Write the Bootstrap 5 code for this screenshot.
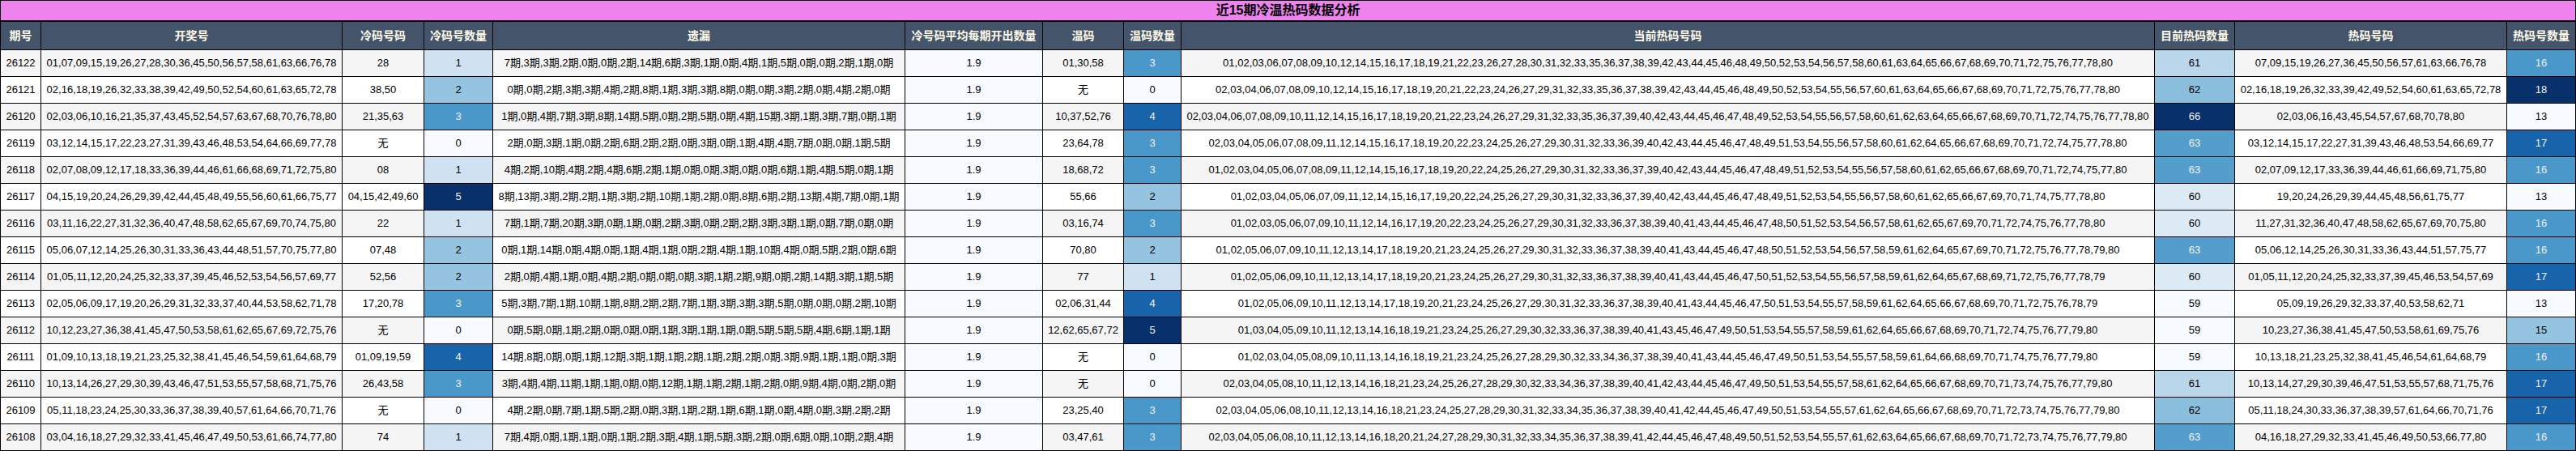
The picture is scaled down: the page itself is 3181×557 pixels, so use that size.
<!DOCTYPE html>
<html lang="zh-CN">
<head>
<meta charset="utf-8">
<title>近15期冷温热码数据分析</title>
<link href="https://cdn.jsdelivr.net/npm/bootstrap@5.3.0/dist/css/bootstrap.min.css" rel="stylesheet">
<style>
html,body{background:#fff;overflow:hidden}
body{font-family:"Liberation Sans","Noto Sans CJK SC",sans-serif;font-size:13px}
.analysis{width:3181px;table-layout:fixed;--bs-table-border-color:#000;--bs-table-color:#000;--bs-table-striped-color:#000;--bs-table-striped-bg:#f5f5f5;--bs-table-bg:#fff}
.analysis>:not(caption)>*>*{padding:6px 2px;line-height:20px;font-size:13px}
.analysis>thead>tr>th{padding:7px 2px;line-height:20px;font-size:14px;font-weight:700;--bs-table-bg:#44546a;--bs-table-color:#fffbe8;color:#fffbe8;background-color:#44546a}
.analysis>thead>tr>th.title-cell{padding:0;line-height:24px;font-size:16px;--bs-table-bg:#ee82ee;--bs-table-color:#000;color:#000;background-color:#ee82ee;border-bottom-width:2px}
.w1{width:50px}.w2{width:372px}.w3{width:101px}.w4{width:85px}.w5{width:509px}.w6{width:170px}.w7{width:100px}.w8{width:71px}.w9{width:1202px}.w10{width:99px}.w11{width:336px}.w12{width:85px}
.table>tbody>tr>td.h0{--bs-table-accent-bg:#f7fbff;--bs-table-bg-type:#f7fbff;background-color:#f7fbff;color:#000}
.table>tbody>tr>td.h1{--bs-table-accent-bg:#d0e1f2;--bs-table-bg-type:#d0e1f2;background-color:#d0e1f2;color:#000}
.table>tbody>tr>td.h2{--bs-table-accent-bg:#94c4df;--bs-table-bg-type:#94c4df;background-color:#94c4df;color:#000}
.table>tbody>tr>td.h3{--bs-table-accent-bg:#4a98c9;--bs-table-bg-type:#4a98c9;background-color:#4a98c9;color:#f1f1f1}
.table>tbody>tr>td.h4{--bs-table-accent-bg:#1764ab;--bs-table-bg-type:#1764ab;background-color:#1764ab;color:#f1f1f1}
.table>tbody>tr>td.h5{--bs-table-accent-bg:#08306b;--bs-table-bg-type:#08306b;background-color:#08306b;color:#f1f1f1}
.table>tbody>tr>td.c60{--bs-table-accent-bg:#dceaf6;--bs-table-bg-type:#dceaf6;background-color:#dceaf6;color:#000}
.table>tbody>tr>td.c61{--bs-table-accent-bg:#bad6eb;--bs-table-bg-type:#bad6eb;background-color:#bad6eb;color:#000}
.table>tbody>tr>td.c62{--bs-table-accent-bg:#89bedc;--bs-table-bg-type:#89bedc;background-color:#89bedc;color:#000}
.table>tbody>tr>td.c63{--bs-table-accent-bg:#539ecd;--bs-table-bg-type:#539ecd;background-color:#539ecd;color:#f1f1f1}
</style>
</head>
<body>
<table class="table table-bordered table-striped analysis text-center align-middle text-nowrap mb-0">
<colgroup><col class="w1"><col class="w2"><col class="w3"><col class="w4"><col class="w5"><col class="w6"><col class="w7"><col class="w8"><col class="w9"><col class="w10"><col class="w11"><col class="w12"></colgroup>
<thead>
<tr><th colspan="12" class="title-cell">近15期冷温热码数据分析</th></tr>
<tr><th>期号</th><th>开奖号</th><th>冷码号码</th><th>冷码号数量</th><th>遗漏</th><th>冷号码平均每期开出数量</th><th>温码</th><th>温码数量</th><th>当前热码号码</th><th>目前热码数量</th><th>热码号码</th><th>热码号数量</th></tr>
</thead>
<tbody>
<tr><td>26122</td><td>01,07,09,15,19,26,27,28,30,36,45,50,56,57,58,61,63,66,76,78</td><td>28</td><td class="h1">1</td><td>7期,3期,3期,2期,0期,0期,2期,14期,6期,3期,1期,0期,4期,1期,5期,0期,0期,2期,1期,0期</td><td class="h0">1.9</td><td>01,30,58</td><td class="h3">3</td><td>01,02,03,06,07,08,09,10,12,14,15,16,17,18,19,21,22,23,26,27,28,30,31,32,33,35,36,37,38,39,42,43,44,45,46,48,49,50,52,53,54,56,57,58,60,61,63,64,65,66,67,68,69,70,71,72,75,76,77,78,80</td><td class="c61">61</td><td>07,09,15,19,26,27,36,45,50,56,57,61,63,66,76,78</td><td class="h3">16</td></tr>
<tr><td>26121</td><td>02,16,18,19,26,32,33,38,39,42,49,50,52,54,60,61,63,65,72,78</td><td>38,50</td><td class="h2">2</td><td>0期,0期,2期,3期,3期,4期,2期,8期,1期,3期,3期,8期,0期,0期,3期,2期,0期,4期,2期,0期</td><td class="h0">1.9</td><td>无</td><td class="h0">0</td><td>02,03,04,06,07,08,09,10,12,14,15,16,17,18,19,20,21,22,23,24,26,27,29,31,32,33,35,36,37,38,39,42,43,44,45,46,48,49,50,52,53,54,55,56,57,60,61,63,64,65,66,67,68,69,70,71,72,75,76,77,78,80</td><td class="c62">62</td><td>02,16,18,19,26,32,33,39,42,49,52,54,60,61,63,65,72,78</td><td class="h5">18</td></tr>
<tr><td>26120</td><td>02,03,06,10,16,21,35,37,43,45,52,54,57,63,67,68,70,76,78,80</td><td>21,35,63</td><td class="h3">3</td><td>1期,0期,4期,7期,3期,8期,14期,5期,0期,2期,5期,0期,4期,15期,3期,1期,3期,7期,0期,1期</td><td class="h0">1.9</td><td>10,37,52,76</td><td class="h4">4</td><td>02,03,04,06,07,08,09,10,11,12,14,15,16,17,18,19,20,21,22,23,24,26,27,29,31,32,33,35,36,37,39,40,42,43,44,45,46,47,48,49,52,53,54,55,56,57,58,60,61,62,63,64,65,66,67,68,69,70,71,72,74,75,76,77,78,80</td><td class="h5">66</td><td>02,03,06,16,43,45,54,57,67,68,70,78,80</td><td class="h0">13</td></tr>
<tr><td>26119</td><td>03,12,14,15,17,22,23,27,31,39,43,46,48,53,54,64,66,69,77,78</td><td>无</td><td class="h0">0</td><td>2期,0期,3期,1期,0期,2期,6期,2期,2期,0期,3期,0期,1期,4期,4期,7期,0期,0期,1期,5期</td><td class="h0">1.9</td><td>23,64,78</td><td class="h3">3</td><td>02,03,04,05,06,07,08,09,11,12,14,15,16,17,18,19,20,22,23,24,25,26,27,29,30,31,32,33,36,39,40,42,43,44,45,46,47,48,49,51,53,54,55,56,57,58,60,61,62,64,65,66,67,68,69,70,71,72,74,75,77,78,80</td><td class="c63">63</td><td>03,12,14,15,17,22,27,31,39,43,46,48,53,54,66,69,77</td><td class="h4">17</td></tr>
<tr><td>26118</td><td>02,07,08,09,12,17,18,33,36,39,44,46,61,66,68,69,71,72,75,80</td><td>08</td><td class="h1">1</td><td>4期,2期,10期,4期,2期,4期,6期,2期,1期,0期,0期,3期,0期,0期,6期,1期,4期,5期,0期,1期</td><td class="h0">1.9</td><td>18,68,72</td><td class="h3">3</td><td>01,02,03,04,05,06,07,08,09,11,12,14,15,16,17,18,19,20,22,24,25,26,27,29,30,31,32,33,36,37,39,40,42,43,44,45,46,47,48,49,51,52,53,54,55,56,57,58,60,61,62,65,66,67,68,69,70,71,72,74,75,77,80</td><td class="c63">63</td><td>02,07,09,12,17,33,36,39,44,46,61,66,69,71,75,80</td><td class="h3">16</td></tr>
<tr><td>26117</td><td>04,15,19,20,24,26,29,39,42,44,45,48,49,55,56,60,61,66,75,77</td><td>04,15,42,49,60</td><td class="h5">5</td><td>8期,13期,3期,2期,2期,1期,3期,2期,10期,1期,2期,0期,8期,6期,2期,13期,4期,7期,0期,1期</td><td class="h0">1.9</td><td>55,66</td><td class="h2">2</td><td>01,02,03,04,05,06,07,09,11,12,14,15,16,17,19,20,22,24,25,26,27,29,30,31,32,33,36,37,39,40,42,43,44,45,46,47,48,49,51,52,53,54,55,56,57,58,60,61,62,65,66,67,69,70,71,74,75,77,78,80</td><td class="c60">60</td><td>19,20,24,26,29,39,44,45,48,56,61,75,77</td><td class="h0">13</td></tr>
<tr><td>26116</td><td>03,11,16,22,27,31,32,36,40,47,48,58,62,65,67,69,70,74,75,80</td><td>22</td><td class="h1">1</td><td>7期,1期,7期,20期,3期,0期,1期,0期,2期,3期,0期,2期,2期,3期,3期,1期,0期,7期,0期,0期</td><td class="h0">1.9</td><td>03,16,74</td><td class="h3">3</td><td>01,02,03,05,06,07,09,10,11,12,14,16,17,19,20,22,23,24,25,26,27,29,30,31,32,33,36,37,38,39,40,41,43,44,45,46,47,48,50,51,52,53,54,56,57,58,61,62,65,67,69,70,71,72,74,75,76,77,78,80</td><td class="c60">60</td><td>11,27,31,32,36,40,47,48,58,62,65,67,69,70,75,80</td><td class="h3">16</td></tr>
<tr><td>26115</td><td>05,06,07,12,14,25,26,30,31,33,36,43,44,48,51,57,70,75,77,80</td><td>07,48</td><td class="h2">2</td><td>0期,1期,14期,0期,4期,0期,1期,4期,1期,0期,2期,4期,1期,10期,4期,0期,5期,2期,0期,6期</td><td class="h0">1.9</td><td>70,80</td><td class="h2">2</td><td>01,02,05,06,07,09,10,11,12,13,14,17,18,19,20,21,23,24,25,26,27,29,30,31,32,33,36,37,38,39,40,41,43,44,45,46,47,48,50,51,52,53,54,56,57,58,59,61,62,64,65,67,69,70,71,72,75,76,77,78,79,80</td><td class="c63">63</td><td>05,06,12,14,25,26,30,31,33,36,43,44,51,57,75,77</td><td class="h3">16</td></tr>
<tr><td>26114</td><td>01,05,11,12,20,24,25,32,33,37,39,45,46,52,53,54,56,57,69,77</td><td>52,56</td><td class="h2">2</td><td>2期,0期,4期,1期,0期,4期,2期,0期,0期,0期,3期,1期,2期,9期,0期,2期,14期,3期,1期,5期</td><td class="h0">1.9</td><td>77</td><td class="h1">1</td><td>01,02,05,06,09,10,11,12,13,14,17,18,19,20,21,23,24,25,26,27,29,30,31,32,33,36,37,38,39,40,41,43,44,45,46,47,50,51,52,53,54,55,56,57,58,59,61,62,64,65,67,68,69,71,72,75,76,77,78,79</td><td class="c60">60</td><td>01,05,11,12,20,24,25,32,33,37,39,45,46,53,54,57,69</td><td class="h4">17</td></tr>
<tr><td>26113</td><td>02,05,06,09,17,19,20,26,29,31,32,33,37,40,44,53,58,62,71,78</td><td>17,20,78</td><td class="h3">3</td><td>5期,3期,7期,1期,10期,1期,8期,2期,2期,7期,1期,3期,3期,3期,5期,0期,0期,0期,2期,10期</td><td class="h0">1.9</td><td>02,06,31,44</td><td class="h4">4</td><td>01,02,05,06,09,10,11,12,13,14,17,18,19,20,21,23,24,25,26,27,29,30,31,32,33,36,37,38,39,40,41,43,44,45,46,47,50,51,53,54,55,57,58,59,61,62,64,65,66,67,68,69,70,71,72,75,76,78,79</td><td class="h0">59</td><td>05,09,19,26,29,32,33,37,40,53,58,62,71</td><td class="h0">13</td></tr>
<tr><td>26112</td><td>10,12,23,27,36,38,41,45,47,50,53,58,61,62,65,67,69,72,75,76</td><td>无</td><td class="h0">0</td><td>0期,5期,0期,1期,2期,0期,0期,0期,1期,3期,1期,1期,0期,5期,5期,5期,4期,6期,1期,1期</td><td class="h0">1.9</td><td>12,62,65,67,72</td><td class="h5">5</td><td>01,03,04,05,09,10,11,12,13,14,16,18,19,21,23,24,25,26,27,29,30,32,33,36,37,38,39,40,41,43,45,46,47,49,50,51,53,54,55,57,58,59,61,62,64,65,66,67,68,69,70,71,72,74,75,76,77,79,80</td><td class="h0">59</td><td>10,23,27,36,38,41,45,47,50,53,58,61,69,75,76</td><td class="h2">15</td></tr>
<tr><td>26111</td><td>01,09,10,13,18,19,21,23,25,32,38,41,45,46,54,59,61,64,68,79</td><td>01,09,19,59</td><td class="h4">4</td><td>14期,8期,0期,0期,1期,12期,3期,1期,1期,2期,1期,2期,2期,0期,3期,9期,1期,1期,0期,3期</td><td class="h0">1.9</td><td>无</td><td class="h0">0</td><td>01,02,03,04,05,08,09,10,11,13,14,16,18,19,21,23,24,25,26,27,28,29,30,32,33,34,36,37,38,39,40,41,43,44,45,46,47,49,50,51,53,54,55,57,58,59,61,64,66,68,69,70,71,74,75,76,77,79,80</td><td class="h0">59</td><td>10,13,18,21,23,25,32,38,41,45,46,54,61,64,68,79</td><td class="h3">16</td></tr>
<tr><td>26110</td><td>10,13,14,26,27,29,30,39,43,46,47,51,53,55,57,58,68,71,75,76</td><td>26,43,58</td><td class="h3">3</td><td>3期,4期,4期,11期,1期,1期,0期,0期,12期,1期,1期,2期,1期,2期,0期,9期,4期,0期,2期,0期</td><td class="h0">1.9</td><td>无</td><td class="h0">0</td><td>02,03,04,05,08,10,11,12,13,14,16,18,21,23,24,25,26,27,28,29,30,32,33,34,36,37,38,39,40,41,42,43,44,45,46,47,49,50,51,53,54,55,57,58,61,62,64,65,66,67,68,69,70,71,73,74,75,76,77,79,80</td><td class="c61">61</td><td>10,13,14,27,29,30,39,46,47,51,53,55,57,68,71,75,76</td><td class="h4">17</td></tr>
<tr><td>26109</td><td>05,11,18,23,24,25,30,33,36,37,38,39,40,57,61,64,66,70,71,76</td><td>无</td><td class="h0">0</td><td>4期,2期,0期,7期,1期,5期,2期,0期,3期,1期,2期,1期,6期,1期,0期,4期,0期,3期,2期,2期</td><td class="h0">1.9</td><td>23,25,40</td><td class="h3">3</td><td>02,03,04,05,06,08,10,11,12,13,14,16,18,21,23,24,25,27,28,29,30,31,32,33,34,35,36,37,38,39,40,41,42,44,45,46,47,49,50,51,53,54,55,57,61,62,64,65,66,67,68,69,70,71,72,73,74,75,76,77,79,80</td><td class="c62">62</td><td>05,11,18,24,30,33,36,37,38,39,57,61,64,66,70,71,76</td><td class="h4">17</td></tr>
<tr><td>26108</td><td>03,04,16,18,27,29,32,33,41,45,46,47,49,50,53,61,66,74,77,80</td><td>74</td><td class="h1">1</td><td>7期,4期,0期,1期,1期,0期,1期,2期,3期,4期,1期,5期,3期,2期,0期,6期,0期,10期,2期,4期</td><td class="h0">1.9</td><td>03,47,61</td><td class="h3">3</td><td>02,03,04,05,06,08,10,11,12,13,14,16,18,20,21,24,27,28,29,30,31,32,33,34,35,36,37,38,39,41,42,44,45,46,47,48,49,50,51,52,53,54,55,57,61,62,63,64,65,66,67,68,69,70,71,72,73,74,75,76,77,79,80</td><td class="c63">63</td><td>04,16,18,27,29,32,33,41,45,46,49,50,53,66,77,80</td><td class="h3">16</td></tr>
</tbody>
</table>
<script src="https://cdn.jsdelivr.net/npm/bootstrap@5.3.0/dist/js/bootstrap.bundle.min.js"></script>
</body>
</html>
